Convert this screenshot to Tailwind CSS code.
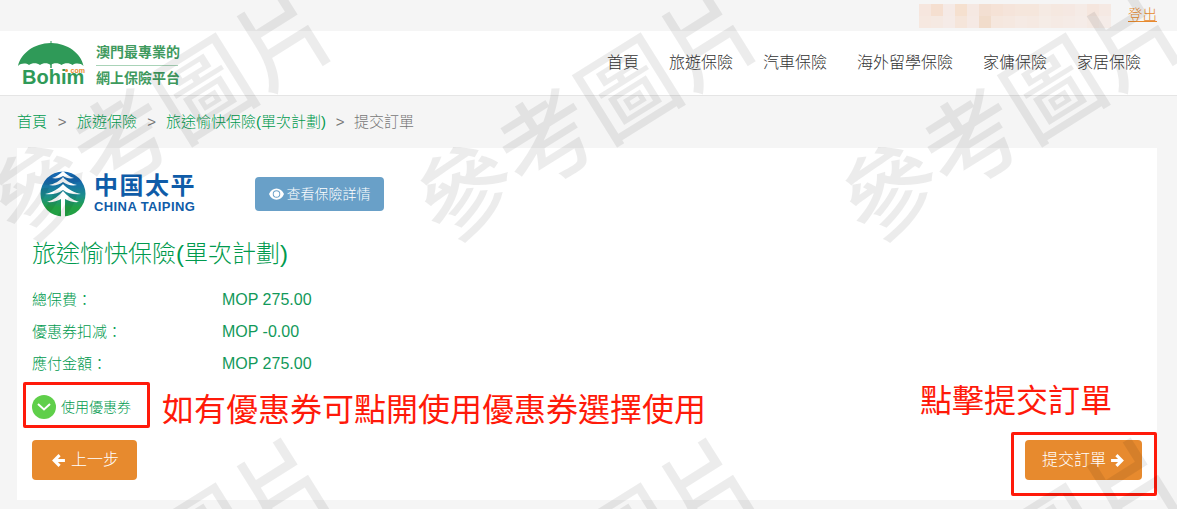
<!DOCTYPE html>
<html lang="zh-Hant">
<head>
    <meta charset="UTF-8">
    <title>提交訂單</title>
    <script src="https://cdn.jsdelivr.net/npm/@tailwindcss/browser@4"></script>
</head>
<body class="relative h-[509px] w-[1177px] overflow-hidden bg-[#f5f5f5] font-['Liberation_Sans','Noto_Sans_CJK_TC',sans-serif] text-[16px] text-[#333]">

    <!-- top bar -->
    <div class="flex h-[31px] items-start justify-end pr-5">
        <div class="mt-1 mr-[17px] grid h-6 w-[192px] grid-cols-16 grid-rows-2">
            <i class="bg-[#f6e6de]"></i><i class="bg-[#f5dfd0]"></i><i class="bg-[#f5eae6]"></i><i class="bg-[#f5e0cf]"></i><i class="bg-[#f5e8e2]"></i><i class="bg-[#f3dfd2]"></i><i class="bg-[#f5e2d6]"></i><i class="bg-[#f5e4da]"></i><i class="bg-[#f5e6dc]"></i><i class="bg-[#f5e6dc]"></i><i class="bg-[#f5eae3]"></i><i class="bg-[#f5e8e0]"></i><i class="bg-[#f5e8e2]"></i><i class="bg-[#f5ebe6]"></i><i class="bg-[#f5e6de]"></i><i class="bg-[#f5e9e3]"></i>
            <i class="bg-[#f6e8e0]"></i><i class="bg-[#f5e9e2]"></i><i class="bg-[#f5ebe7]"></i><i class="bg-[#f5e5da]"></i><i class="bg-[#f5e9e4]"></i><i class="bg-[#f1dccb]"></i><i class="bg-[#f5e7de]"></i><i class="bg-[#f5e8e0]"></i><i class="bg-[#f5eae4]"></i><i class="bg-[#f5e9e2]"></i><i class="bg-[#f5ece6]"></i><i class="bg-[#f5eae4]"></i><i class="bg-[#f5ebe6]"></i><i class="bg-[#f5ece8]"></i><i class="bg-[#f5eae4]"></i><i class="bg-[#f5ece8]"></i>
        </div>
        <a href="#" class="mt-[5px] text-[14.5px] leading-5 font-light text-[#e78a2e] underline">登出</a>
    </div>

    <!-- header -->
    <header class="flex h-[65px] items-center justify-between border-b border-[#e5e5e5] bg-white pr-[36px] pl-[17px]">
        <div class="mt-[10px] flex items-start self-start">
            <div class="flex w-[68px] flex-col">
                <svg viewBox="0 0 68 27" class="h-[27px] w-[68px]">
                    <path fill="#2f9a58" d="M33.500 0v2C17 2.500 4 12 1 25c3-3 8-3 11-1 3-2.500 8-2.500 11 0 3-2.500 8-2.500 10.500 0 3-2.500 8-2.500 11 0 3-2.500 8-2.500 11 0 3-2 8-2 11 1C64 12 50.500 2.500 34.500 2V0z"/>
                    <path stroke="#2f9a58" stroke-width="1.500" d="M34 22v5"/>
                </svg>
                <div class="relative ml-[5px] h-[17px] text-[20px] leading-[18px] font-bold text-[#2f9a58]">Bohim<span class="absolute top-[-1px] right-0 flex items-center gap-[3px] text-[7px] leading-[7px] text-[#e78a2e]"><i class="size-[3px] rounded-full bg-[#e78a2e]"></i>com</span></div>
            </div>
            <div class="mt-[1px] ml-[11px] flex w-[86px] flex-col text-[14px] leading-[20px] font-bold whitespace-nowrap text-[#3f9a5e]">
                <span>澳門最專業的</span>
                <span class="mt-[3px] mb-[2px] h-px w-[82px] bg-[#a9d3b8]"></span>
                <span>網上保險平台</span>
            </div>
        </div>
        <nav class="flex gap-[30px] text-[16px] font-light text-[#333]">
            <a href="#">首頁</a>
            <a href="#">旅遊保險</a>
            <a href="#">汽車保險</a>
            <a href="#">海外留學保險</a>
            <a href="#">家傭保險</a>
            <a href="#">家居保險</a>
        </nav>
    </header>

    <!-- breadcrumb -->
    <div class="flex h-[52px] items-center pt-[1px] pl-[17px] text-[15px] font-light text-[#009a4e]">
        <a href="#">首頁</a>
        <span class="mx-[10px] w-[10px] text-center text-[#777]">&gt;</span>
        <a href="#">旅遊保險</a>
        <span class="mx-[10px] w-[9px] text-center text-[#777]">&gt;</span>
        <a href="#">旅途愉快保險(單次計劃)</a>
        <span class="mx-[9px] w-[10px] text-center text-[#777]">&gt;</span>
        <span class="text-[#777]">提交訂單</span>
    </div>

    <!-- card -->
    <main class="mx-[17px] h-[352px] w-[1140px] bg-white pt-[23px] pl-[15px]">
        <div class="flex items-center">
            <div class="ml-[8px] flex items-center">
                <svg viewBox="0 0 46 46" class="h-[46px] w-[46px]">
                    <defs>
                        <linearGradient id="tp" x1="0" y1="0" x2="0" y2="1">
                            <stop offset="0.2" stop-color="#1668b0"/>
                            <stop offset="0.55" stop-color="#1b8f8a"/>
                            <stop offset="0.8" stop-color="#22a044"/>
                        </linearGradient>
                    </defs>
                    <circle cx="23" cy="23" r="22.500" fill="url(#tp)"/>
                    <g fill="#fff">
                        <path d="M23 0C20 3 16 6 12 7c4 1 8 0 11-2 3 2 7 3 11 2-4-1-8-4-11-7z"/>
                        <path d="M23 6C20 10 14 13 9 14c5 1 10 0 14-3 4 3 9 4 14 3-5-1-11-4-14-8z"/>
                        <path d="M23 13C19 18 11 22 5 23c6 1 13 0 18-4 5 4 12 5 18 4-6-1-14-5-18-10z"/>
                        <path d="M23 20C19 25 13 29 7 31c5 .5 10-.5 14-3v18h4V28c4 2.500 9 3.500 14 3-6-2-12-6-16-11z"/>
                    </g>
                </svg>
                <div class="ml-[8px] flex flex-col text-[#0f5ca8]">
                    <span class="text-[24px] leading-[26px] font-bold tracking-[1.500px]">中国太平</span>
                    <span class="text-[13px] leading-[16px] font-bold tracking-[0.400px] whitespace-nowrap">CHINA TAIPING</span>
                </div>
            </div>
            <a href="#" class="ml-[59px] flex h-[34px] w-[129px] items-center justify-center gap-[3px] rounded-[4px] bg-[#69a0c8] text-[14px] font-light text-white">
                <svg viewBox="0 0 16 12" class="h-3 w-[15px]"><path fill="#fff" fill-rule="evenodd" d="M8 0C4.500 0 1.500 2.200 0 6c1.500 3.800 4.500 6 8 6s6.500-2.200 8-6c-1.500-3.800-4.500-6-8-6zm0 2a4 4 0 1 1 0 8 4 4 0 0 1 0-8z"/><circle cx="8" cy="6" r="3" fill="#fff"/></svg>
                查看保險詳情
            </a>
        </div>

        <h3 class="mt-[20px] text-[24px] leading-[34px] font-light text-[#009a4e]">旅途愉快保險(單次計劃)</h3>

        <dl class="mt-[13px] grid w-[400px] grid-cols-[190px_1fr] text-[#12995a]">
            <dt class="h-8 text-[15px] leading-8 font-light text-[#009a4e]">總保費：</dt><dd class="h-8 leading-8">MOP 275.00</dd>
            <dt class="h-8 text-[15px] leading-8 font-light text-[#009a4e]">優惠券扣减：</dt><dd class="h-8 leading-8">MOP -0.00</dd>
            <dt class="h-8 text-[15px] leading-8 font-light text-[#009a4e]">應付金額：</dt><dd class="h-8 leading-8">MOP 275.00</dd>
        </dl>

        <div class="mt-[15px] flex items-center">
            <span class="flex size-6 items-center justify-center rounded-full bg-[#5fcf4a]">
                <svg viewBox="0 0 14 8" class="h-2 w-[14px]"><path fill="none" stroke="#fff" stroke-width="2" d="M1 1l6 5.500L13 1"/></svg>
            </span>
            <span class="ml-[5px] text-[14px] font-light text-[#009a4e]">使用優惠券</span>
        </div>

        <div class="mt-[21px] flex justify-between pr-[15px]">
            <a href="#" class="flex h-10 w-[105px] items-center justify-center gap-[5px] rounded-[4px] bg-[#e78a2e] pl-[1px] font-light text-white">
                <svg viewBox="0 0 14 14" class="size-[15px]"><path fill="#fff" d="M7 1L1 7l6 6 2-2-2.500-2.500H13v-3H6.500L9 3z"/></svg>
                上一步
            </a>
            <a href="#" class="flex h-10 w-[117px] items-center justify-center gap-1 rounded-[4px] bg-[#e78a2e] font-light text-white">
                提交訂單
                <svg viewBox="0 0 14 14" class="size-[15px]"><path fill="#fff" d="M7 1l6 6-6 6-2-2 2.500-2.500H1v-3h6.500L5 3z"/></svg>
            </a>
        </div>
    </main>

    <!-- red annotations -->
    <div class="absolute top-[382px] left-[23px] h-[46px] w-[127px] rounded-[2px] border-[3px] border-[#ff1a0a]"></div>
    <div class="absolute top-[432px] left-[1011px] h-[64px] w-[146px] rounded-[2px] border-[3px] border-[#ff1a0a]"></div>
    <div class="absolute top-[390px] left-[162px] text-[32px] leading-10 whitespace-nowrap text-[#ff1a0a]">如有優惠券可點開使用優惠券選擇使用</div>
    <div class="absolute top-[381px] left-[920px] text-[32px] leading-10 whitespace-nowrap text-[#ff1a0a]">點擊提交訂單</div>

    <!-- watermark -->
    <div class="pointer-events-none absolute inset-0 overflow-hidden text-[96px] leading-[100px] font-medium whitespace-nowrap text-black/[0.075]">
        <span class="absolute top-[67px] left-[-36px] w-[400px] -rotate-[32deg] text-center">參考圖片</span>
        <span class="absolute top-[67px] left-[389px] w-[400px] -rotate-[32deg] text-center">參考圖片</span>
        <span class="absolute top-[67px] left-[814px] w-[400px] -rotate-[32deg] text-center">參考圖片</span>
        <span class="absolute top-[517px] left-[-36px] w-[400px] -rotate-[32deg] text-center">參考圖片</span>
        <span class="absolute top-[517px] left-[389px] w-[400px] -rotate-[32deg] text-center">參考圖片</span>
        <span class="absolute top-[517px] left-[814px] w-[400px] -rotate-[32deg] text-center">參考圖片</span>
    </div>
</body>
</html>
